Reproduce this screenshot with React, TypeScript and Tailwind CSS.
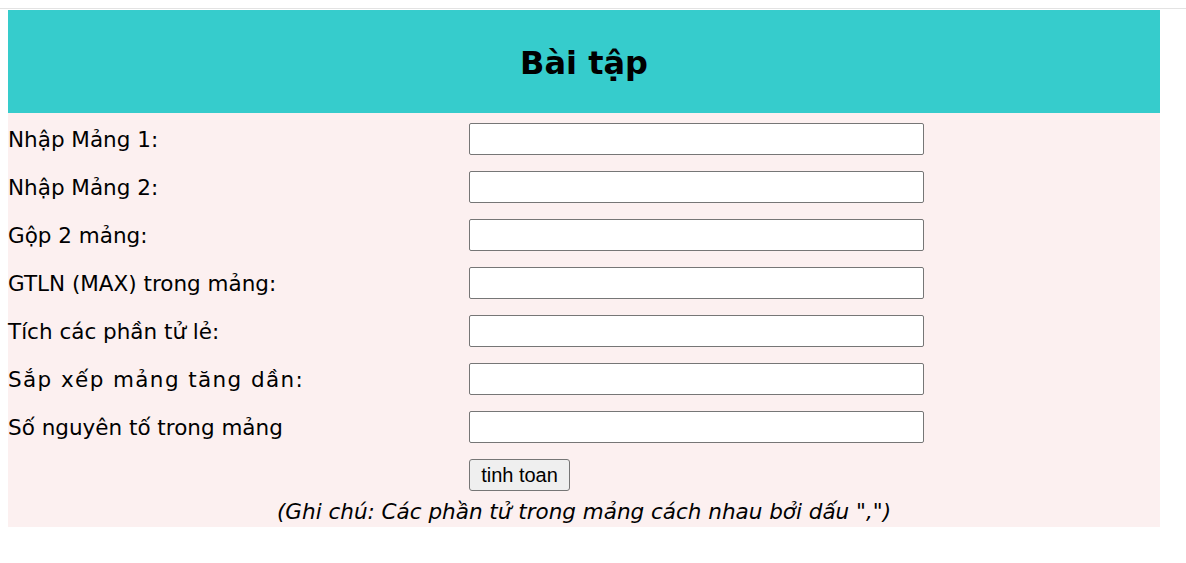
import React from "react";

const rows = [
  { t: "Nhập Mảng 1:", c: "" },
  { t: "Nhập Mảng 2:", c: "" },
  { t: "Gộp 2 mảng:", c: "" },
  { t: "GTLN (MAX) trong mảng:", c: "" },
  { t: "Tích các phần tử lẻ:", c: "" },
  { t: "Sắp xếp mảng tăng dần:", c: "tracking-[1.4px]" },
  { t: "Số nguyên tố trong mảng", c: "" },
];

export default function App() {
  return (
    <div className="min-h-screen bg-white text-black [font-family:'DejaVu_Sans',Verdana,sans-serif]">
      <div className="h-2" />
      <div className="h-px bg-[#e3e3e3]" />
      <div className="h-px" />
      <div className="mx-2 w-[1152px]">
        <div className="h-[103px] bg-[#36cccc] flex items-center justify-center">
          <h1 className="text-[32px] font-bold leading-none pt-[2px]">Bài tập</h1>
        </div>
        <div className="bg-[#fcf0f0] pt-[10px]">
          <div className="flex flex-col gap-4">
            {rows.map((r) => (
              <div key={r.t} className="grid grid-cols-[461px_1fr] items-center h-8">
                <label className={"text-[21.5px] leading-none pt-[1px] " + r.c}>{r.t}</label>
                <input
                  type="text"
                  className="w-[455px] h-8 bg-white border border-[#767676] rounded-[2px]"
                />
              </div>
            ))}
            <div className="grid grid-cols-[461px_1fr] items-center h-8">
              <div />
              <div>
                <button className="w-[101px] h-8 bg-[#efefef] border border-[#767676] rounded-[3px] text-[20px] leading-none [font-family:'Liberation_Sans',Arial,sans-serif]">
                  tinh toan
                </button>
              </div>
            </div>
          </div>
          <div className="h-9 pt-[10px] flex justify-center">
            <p className="italic text-[21.5px] leading-none">(Ghi chú: Các phần tử trong mảng cách nhau bởi dấu ",")</p>
          </div>
        </div>
      </div>
    </div>
  );
}
